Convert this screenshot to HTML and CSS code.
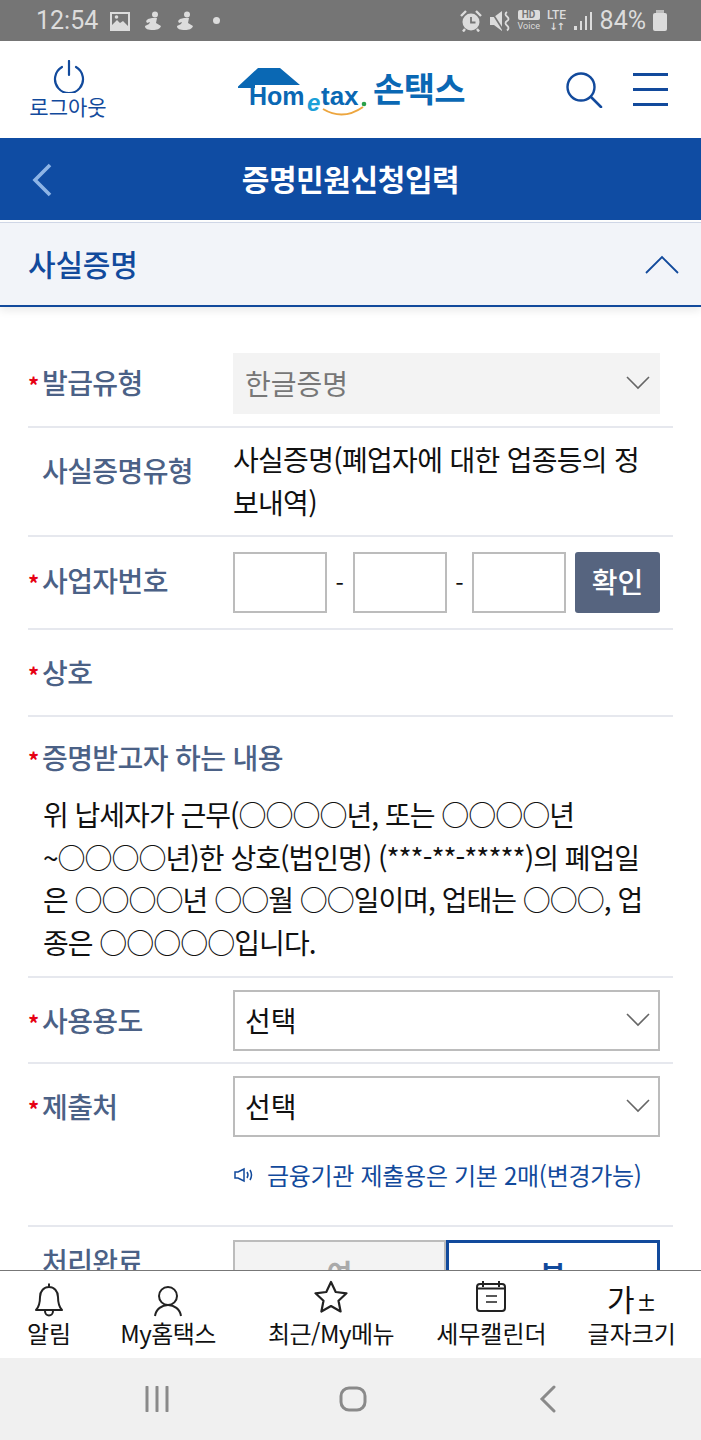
FILE: index.html
```html
<!DOCTYPE html>
<html lang="ko">
<head>
  <meta charset="UTF-8">
  <meta name="viewport" content="width=device-width, initial-scale=1.0">
  <title>증명민원신청입력</title>
  <link rel="stylesheet" href="styles.css">
</head>
<body>
  <div class="status-bar">
    <div class="status-left">
      <span class="clock">12:54</span>
      <svg width="20" height="20" viewBox="0 0 20 20"><path fill="#dcdcdc" fill-rule="evenodd" d="M0 1h20v19H0zM2 14l5-5 3 3 3-2 5 5V3H2z"/><circle cx="6.500" cy="6" r="1.800" fill="#dcdcdc"/></svg>
      <svg width="18" height="20" viewBox="0 0 18 20"><g fill="#dcdcdc"><circle cx="11" cy="3.500" r="3"/><path d="M4 8l4-1h5l-1 5 5 3c-1 3-4 4-8 4-5 0-8-1-8-4l4-2 1-2-3 1-1-2z"/></g></svg>
      <svg width="18" height="20" viewBox="0 0 18 20"><g fill="#dcdcdc"><circle cx="11" cy="3.500" r="3"/><path d="M4 8l4-1h5l-1 5 5 3c-1 3-4 4-8 4-5 0-8-1-8-4l4-2 1-2-3 1-1-2z"/></g></svg>
      <span class="dot"></span>
    </div>
    <div class="status-right">
      <svg width="22" height="22" viewBox="0 0 22 22"><circle cx="11" cy="12" r="8.500" fill="#dcdcdc"/><path d="M11 7v5.500h4.500" fill="none" stroke="#757575" stroke-width="1.800"/><path d="M1 6l5-5M21 6l-5-5M5 19l-2 2.500M17 19l2 2.500" stroke="#dcdcdc" stroke-width="2.400"/></svg>
      <svg width="22" height="22" viewBox="0 0 22 22"><path fill="#dcdcdc" d="M1 7h4l8-6v20l-8-6H1z"/><path d="M2 1l12 19" stroke="#757575" stroke-width="1.600"/><path d="M18 2q-3 2 0 4.500t0 4.500 0 4.500 0 5" fill="none" stroke="#dcdcdc" stroke-width="1.800"/></svg>
      <span class="net-hd"><b>HD</b><i>Voice</i></span>
      <span class="net-lte">LTE<em>↓↑</em></span>
      <svg width="19" height="20" viewBox="0 0 19 20"><path fill="#dcdcdc" d="M0 15h3v4H0zM6 10h2v9H6zM11 5h2v14h-2zM16 1h2v18h-2z"/></svg>
      <span class="battery-text">84%</span>
      <span class="battery"></span>
    </div>
  </div>

  <header class="top-bar">
    <a class="logout">
      <svg width="32" height="33" viewBox="0 0 32 33"><path d="M9 7a14 14 0 1 0 14 0M16 1v14" fill="none" stroke="#124a9c" stroke-width="2.200" stroke-linecap="round"/></svg>
      <span>로그아웃</span>
    </a>
    <div class="logo">
      <svg width="130" height="52" viewBox="0 0 130 52">
        <path fill="#0a68b4" d="M0 20.500L20 2h22l20 17H17v3H0z"/>
        <text class="logo-en" x="11" y="39" font-size="25">Hom</text>
        <text class="logo-e" x="69" y="45" font-size="24">e</text>
        <text class="logo-en" x="83" y="39" font-size="26">tax</text>
        <circle cx="126" cy="38" r="2.300" fill="#2aa14a"/>
        <path d="M85 43q20 12 40-2" fill="none" stroke="#eda63f" stroke-width="2"/>
      </svg>
      <span class="logo-ko">손택스</span>
    </div>
    <div class="top-actions">
      <svg width="38" height="36" viewBox="0 0 38 36"><circle cx="16" cy="15" r="13.500" fill="none" stroke="#124a9c" stroke-width="2.400"/><path d="M26 25l10 10" stroke="#124a9c" stroke-width="2.600" stroke-linecap="round"/></svg>
      <div class="burger"><span></span><span></span><span></span></div>
    </div>
  </header>

  <div class="title-bar">
    <svg class="back" width="22" height="34" viewBox="0 0 22 34"><path d="M19 2L4 17l15 15" fill="none" stroke="#8db4e6" stroke-width="3.600"/></svg>
    <h1>증명민원신청입력</h1>
  </div>

  <div class="accordion-head">
    <h2>사실증명</h2>
    <svg width="34" height="19" viewBox="0 0 34 19"><path d="M1 18L17 2l16 16" fill="none" stroke="#124a9c" stroke-width="1.800"/></svg>
  </div>

  <main class="form">
    <div class="row row-issue">
      <label class="req">발급유형</label>
      <div class="select select-off"><span>한글증명</span><svg width="24" height="14" viewBox="0 0 24 14"><path d="M1 1l11 11L23 1" fill="none" stroke="#666" stroke-width="1.600"/></svg></div>
    </div>
    <div class="row row-type">
      <label>사실증명유형</label>
      <p class="value">사실증명(폐업자에 대한 업종등의 정보내역)</p>
    </div>
    <div class="row row-biz">
      <label class="req">사업자번호</label>
      <div class="biz-inputs">
        <span class="box"></span><span class="dash">-</span>
        <span class="box"></span><span class="dash">-</span>
        <span class="box"></span>
        <button class="btn-check">확인</button>
      </div>
    </div>
    <div class="row row-name">
      <label class="req">상호</label>
    </div>
    <div class="row row-content">
      <label class="req">증명받고자 하는 내용</label>
      <p class="content-text">위 납세자가 근무(○○○○년, 또는 ○○○○년 ~○○○○년)한 상호(법인명) (***-**-*****)의 폐업일은 ○○○○년 ○○월 ○○일이며, 업태는 ○○○, 업종은 ○○○○○입니다.</p>
    </div>
    <div class="row row-use">
      <label class="req">사용용도</label>
      <div class="select"><span>선택</span><svg width="24" height="14" viewBox="0 0 24 14"><path d="M1 1l11 11L23 1" fill="none" stroke="#666" stroke-width="1.600"/></svg></div>
    </div>
    <div class="row row-submit">
      <label class="req">제출처</label>
      <div class="submit-col">
        <div class="select"><span>선택</span><svg width="24" height="14" viewBox="0 0 24 14"><path d="M1 1l11 11L23 1" fill="none" stroke="#666" stroke-width="1.600"/></svg></div>
        <p class="notice">
          <svg width="22" height="16" viewBox="0 0 22 16"><path d="M2 5h3l6-3v12l-6-3H2z" fill="none" stroke="#124a9c" stroke-width="1.500"/><path d="M14 5q2 3 0 6M17 3q3 5 0 10" fill="none" stroke="#124a9c" stroke-width="1.500"/></svg>
          <span>금융기관 제출용은 기본 2매(변경가능)</span>
        </p>
      </div>
    </div>
    <div class="row row-done">
      <label>처리완료</label>
      <div class="toggle"><span class="toggle-off">여</span><span class="toggle-on">부</span></div>
    </div>
  </main>

  <nav class="tab-bar">
    <a class="tab tab-alarm">
      <svg width="30" height="38" viewBox="0 0 30 38"><path d="M2 30c3-3 4-7 4-13 0-6 4-10 9-10s9 4 9 10c0 6 1 10 4 13zM15 3.500V7M11 31c0 6 8 6 8 0" fill="none" stroke="#222" stroke-width="2" stroke-linejoin="round"/></svg>
      <span>알림</span>
    </a>
    <a class="tab tab-my">
      <svg width="30" height="38" viewBox="0 0 30 38"><circle cx="15" cy="16" r="9" fill="none" stroke="#222" stroke-width="2"/><path d="M2 36c1-7 7-11 13-11s12 4 13 11" fill="none" stroke="#222" stroke-width="2"/></svg>
      <span>My홈택스</span>
    </a>
    <a class="tab tab-recent">
      <svg width="34" height="38" viewBox="0 0 34 38"><path d="M17 2l4.700 10 10.800 1.300-8 7.500 2.100 10.700L17 26l-9.600 5.500 2.100-10.700-8-7.500L12.300 12z" fill="none" stroke="#222" stroke-width="2.200" stroke-linejoin="round"/></svg>
      <span>최근/My메뉴</span>
    </a>
    <a class="tab tab-cal">
      <svg width="30" height="38" viewBox="0 0 30 38"><rect x="1" y="4" width="28" height="27" rx="3" fill="none" stroke="#222" stroke-width="2"/><path d="M1 8.500h28M7 1v6M23 1v6" fill="none" stroke="#222" stroke-width="2"/><path d="M10 16h11M10 22h11" fill="none" stroke="#222" stroke-width="1.400"/></svg>
      <span>세무캘린더</span>
    </a>
    <a class="tab tab-font">
      <span class="font-icon">가<small>±</small></span>
      <span>글자크기</span>
    </a>
  </nav>

  <div class="nav-bar">
    <svg width="26" height="26" viewBox="0 0 26 26"><path d="M3 1v24M13 1v24M23 1v24" stroke="#8a8a8a" stroke-width="3" stroke-linecap="round"/></svg>
    <svg width="28" height="26" viewBox="0 0 28 26"><rect x="2" y="2" width="24" height="22" rx="8" fill="none" stroke="#8a8a8a" stroke-width="3"/></svg>
    <svg class="nav-back" width="18" height="28" viewBox="0 0 18 28"><path d="M15 2L3 14l12 12" fill="none" stroke="#8a8a8a" stroke-width="3" stroke-linecap="round"/></svg>
  </div>
</body>
</html>
```

FILE: styles.css
```css
* {
  margin: 0;
  padding: 0;
  box-sizing: border-box;
}

html, body {
  height: 100%;
}

body {
  width: 701px;
  height: 1440px;
  display: flex;
  flex-direction: column;
  overflow: hidden;
  font-family: "Noto Sans CJK KR", "Noto Sans", sans-serif;
  color: #111;
  background: #fff;
}

/* status bar */
.status-bar {
  height: 41px;
  flex: none;
  background: #757575;
  color: #dcdcdc;
  display: flex;
  justify-content: space-between;
  align-items: center;
  padding: 0 34px 0 36px;
}

.status-left, .status-right {
  display: flex;
  align-items: center;
}

.status-left { gap: 14px; }
.status-right { gap: 7px; }

.clock, .battery-text {
  font-family: Roboto, sans-serif;
  font-size: 25px;
}

.clock { margin-right: -2px; }

.dot {
  width: 7px;
  height: 7px;
  margin-left: 5px;
  border-radius: 50%;
  background: #dcdcdc;
}

.net-hd {
  width: 22px;
  display: flex;
  flex-direction: column;
  align-items: stretch;
  font-family: Roboto, sans-serif;
  line-height: 1;
  text-align: center;
}

.net-hd b {
  height: 10px;
  background: #dcdcdc;
  color: #757575;
  font-size: 10px;
  line-height: 10px;
  border-radius: 2px;
}

.net-hd i {
  font-style: normal;
  font-size: 9px;
  margin-top: 2px;
}

.net-lte {
  width: 20px;
  display: flex;
  flex-direction: column;
  align-items: center;
  font-family: Roboto, sans-serif;
  font-size: 12px;
  font-weight: 500;
  line-height: 12px;
}

.net-lte em {
  font-family: "DejaVu Sans", sans-serif;
  font-style: normal;
  font-size: 10px;
  font-weight: 700;
  letter-spacing: -1px;
}

.battery {
  width: 14px;
  height: 18px;
  margin-top: 3px;
  background: #dcdcdc;
  border-radius: 2px;
  position: relative;
}

.battery::before {
  content: "";
  position: absolute;
  left: 3px;
  top: -3px;
  width: 8px;
  height: 3px;
  background: #bdbdbd;
}

/* header */
.top-bar {
  height: 97px;
  flex: none;
  display: flex;
  align-items: center;
  padding: 0 33px 0 30px;
}

.logout {
  width: 76px;
  display: flex;
  flex-direction: column;
  align-items: center;
  color: #124a9c;
  font-size: 21px;
  line-height: 26px;
  white-space: nowrap;
}

.logout svg { margin-left: 1px; }

.logo {
  display: flex;
  align-items: center;
  margin: 5px 0 0 132px;
}

.logo-en {
  font-family: "Liberation Sans", sans-serif;
  font-weight: 700;
  fill: #0a68b4;
}

.logo-e {
  font-family: "Liberation Sans", sans-serif;
  font-style: italic;
  font-weight: 700;
  fill: #1ba0d8;
}

.logo-ko {
  margin: -8px 0 0 5px;
  font-size: 34px;
  line-height: 44px;
  font-weight: 700;
  letter-spacing: -0.6px;
  color: #0a68b4;
}

.top-actions {
  margin-left: auto;
  display: flex;
  align-items: center;
  gap: 30px;
}

.burger {
  width: 35px;
  display: flex;
  flex-direction: column;
  gap: 12px;
}

.burger span {
  height: 3px;
  background: #124a9c;
}

/* blue title */
.title-bar {
  height: 82px;
  flex: none;
  padding-bottom: 3px;
  background: #0f4ca3;
  display: flex;
  align-items: center;
  justify-content: center;
  position: relative;
}

.back {
  position: absolute;
  left: 31px;
  top: 25px;
}

.title-bar h1 {
  color: #fff;
  font-size: 30px;
  font-weight: 700;
  letter-spacing: -0.4px;
}

.accordion-head {
  height: 85px;
  flex: none;
  margin-top: 2px;
  padding: 0 22px 0 28px;
  background: #f2f4f9;
  border-top: 1px solid #cfd6e6;
  border-bottom: 2px solid #124a9c;
  box-shadow: 0 4px 8px rgba(0, 0, 0, 0.08);
  display: flex;
  align-items: center;
  justify-content: space-between;
}

.accordion-head h2 {
  padding-bottom: 2px;
  font-size: 30px;
  font-weight: 500;
  letter-spacing: -0.2px;
  color: #124a9c;
}

/* form */
.form {
  flex: 1;
  min-height: 0;
  overflow: hidden;
  margin: 0 28px;
}

.row {
  display: grid;
  grid-template-columns: 205px 427px;
  border-bottom: 2px solid #e6e8ee;
}

.row label {
  padding-left: 14px;
  font-size: 28px;
  font-weight: 500;
  color: #4b6186;
  letter-spacing: -0.6px;
  position: relative;
}

.req::before {
  content: "*";
  position: absolute;
  left: 0;
  top: 2px;
  color: #e60012;
  font-size: 22px;
  font-weight: 700;
}

.select {
  height: 61px;
  border: 2px solid #bcbcbc;
  display: flex;
  align-items: center;
  justify-content: space-between;
  padding: 0 8px 2px 10px;
  font-size: 28px;
  color: #111;
}

.select-off {
  background: #f3f3f3;
  border-color: #f3f3f3;
  color: #777;
}

.row-issue {
  height: 75px;
  margin-top: 46px;
  padding-bottom: 12px;
}

.row-issue label { line-height: 58px; }

.row-type {
  height: 109px;
  padding-top: 10px;
}

.row-type label { line-height: 64px; }

.value {
  font-size: 28px;
  line-height: 43px;
  letter-spacing: -0.7px;
}

.row-biz {
  height: 93px;
  padding-top: 15px;
}

.row-biz label { line-height: 56px; }

.biz-inputs {
  display: flex;
  height: 61px;
  align-items: center;
}

.box {
  width: 94px;
  height: 61px;
  border: 2px solid #bcbcbc;
}

.dash {
  width: 26px;
  text-align: center;
  font-size: 24px;
}

.btn-check {
  width: 85px;
  height: 61px;
  margin-left: 9px;
  padding-bottom: 3px;
  border: 0;
  border-radius: 3px;
  background: #56647f;
  color: #fff;
  font-family: inherit;
  font-size: 28px;
  font-weight: 500;
}

.row-name {
  height: 87px;
}

.row-name label { line-height: 84px; }

.row-content {
  display: block;
  height: 261px;
  padding-top: 18px;
}

.row-content label {
  display: block;
  line-height: 44px;
}

.content-text {
  padding: 14px 10px 0 15px;
  font-size: 28px;
  line-height: 42.7px;
  letter-spacing: -1px;
}

.row-use {
  height: 86px;
  padding-top: 12px;
}

.row-use label { line-height: 60px; }

.row-submit {
  height: 163px;
  padding-top: 12px;
}

.row-submit label { line-height: 60px; }

.notice {
  display: flex;
  align-items: center;
  gap: 12px;
  margin-top: 18px;
  color: #124a9c;
  font-size: 24px;
  line-height: 40px;
  letter-spacing: -0.3px;
}

.row-done {
  border-bottom: 0;
  padding-top: 13px;
}

.row-done label { line-height: 42px; }

.toggle {
  display: grid;
  grid-template-columns: 213px 214px;
  height: 66px;
  font-size: 28px;
  font-weight: 700;
  line-height: 62px;
  text-align: center;
}

.toggle-off {
  background: #f3f3f3;
  border: 2px solid #bcbcbc;
  color: #aaa;
}

.toggle-on {
  border: 3px solid #124a9c;
  color: #124a9c;
}

/* bottom tabs */
.tab-bar {
  height: 88px;
  flex: none;
  background: #fff;
  border-top: 1px solid #777;
  display: flex;
  padding: 9px 0 0 27px;
}

.tab {
  display: flex;
  flex-direction: column;
  align-items: center;
  color: #111;
  font-size: 24px;
  line-height: 30px;
  letter-spacing: -0.5px;
  white-space: nowrap;
}

.tab svg { height: 38px; }

.tab-alarm, .tab-cal, .tab-font { letter-spacing: 0; }

.tab-my { margin-left: 49px; }
.tab-recent { margin-left: 52px; }
.tab-cal { margin-left: 42px; }
.tab-font { margin-left: 41px; }

.font-icon {
  height: 38px;
  font-size: 30px;
  line-height: 36px;
  font-weight: 400;
}

.font-icon small {
  margin-left: 2px;
  font-size: 20px;
  font-weight: 500;
}

.nav-bar {
  height: 82px;
  flex: none;
  background: #f0f0f0;
  display: flex;
  align-items: center;
  padding-left: 144px;
  gap: 169px;
}

.nav-back { margin-left: 3px; }
```
